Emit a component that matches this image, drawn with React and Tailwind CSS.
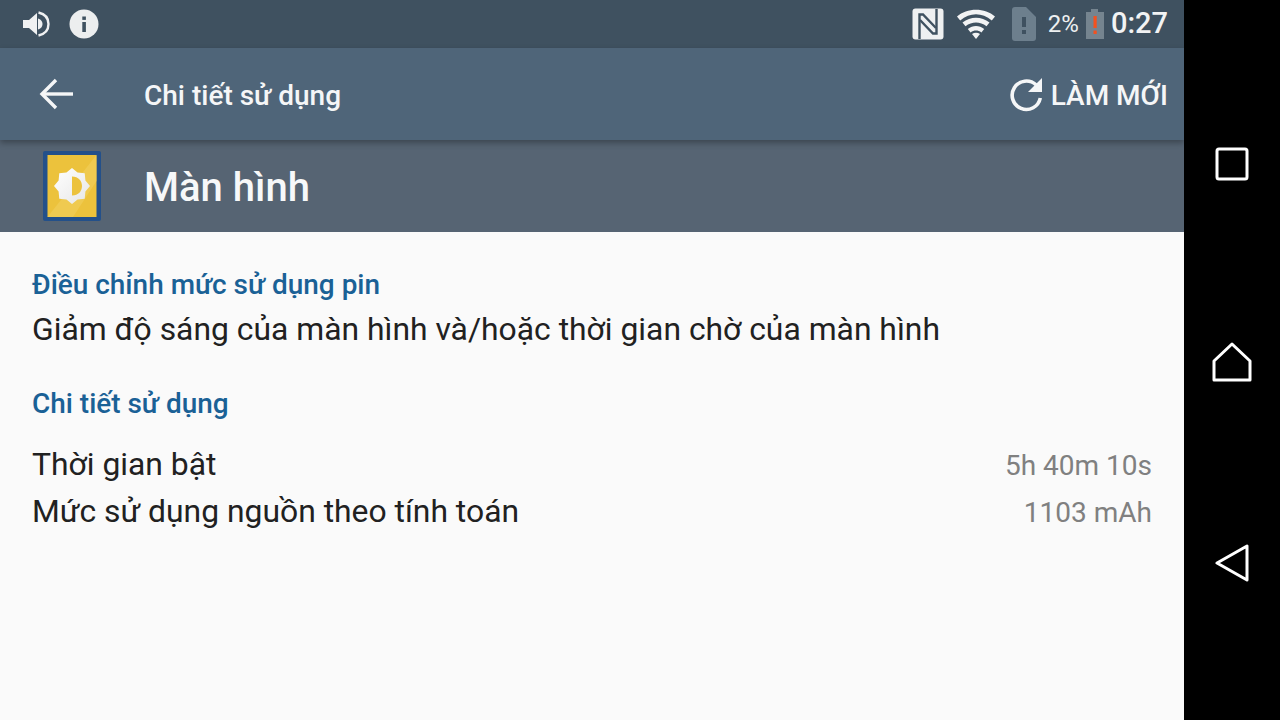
import React from "react";

function Speaker() {
  return (
    <svg width="28" height="28" viewBox="0 0 28 28" fill="none">
      <path d="M1 10h6l8-7v22l-8-7H1z" fill="#f0f1f2" />
      <path d="M16 8.500c3.500 1 4.500 3.500 4.500 5.500s-1 4.500-4.500 5.500z" fill="#f0f1f2" />
      <path d="M16.500 2.500c6.500 1.500 10 6 10 11.500s-3.500 10-10 11.500" stroke="#f0f1f2" strokeWidth="2.400" />
    </svg>
  );
}

function Info() {
  return (
    <svg width="30" height="30" viewBox="0 0 30 30">
      <circle cx="15" cy="15" r="14.500" fill="#eceeef" />
      <rect x="13.300" y="7.500" width="3.600" height="3.400" fill="#3f5160" />
      <rect x="13.300" y="13" width="3.600" height="10" fill="#3f5160" />
    </svg>
  );
}

function Nfc() {
  return (
    <svg width="32" height="32" viewBox="0 0 32 32" fill="none">
      <rect x="0.500" y="0.500" width="31" height="31" rx="3" fill="#eef0f1" />
      <path d="M7.500 31V6.500H11L24 20" stroke="#3f5160" strokeWidth="2.400" />
      <path d="M24.500 1v24.500H21L8 12" stroke="#3f5160" strokeWidth="2.400" />
    </svg>
  );
}

function Wifi() {
  return (
    <svg width="40" height="32" viewBox="0 0 40 32">
      <path d="M1 8.500C11-.5 29-.5 39 8.500l-3.200 4C26 4 14 4 4.200 12.500z" fill="#f2f3f4" />
      <path d="M6.500 14.500c8-6.500 19-6.500 27 0l-3 3.800c-6.500-5-14.500-5-21 0z" fill="#f2f3f4" />
      <path d="M11.800 21c5-4 11.400-4 16.400 0l-2.800 3.500c-3.400-2.600-7.400-2.600-10.800 0z" fill="#f2f3f4" />
      <path d="M16 26c2.400-1.600 5.600-1.600 8 0l-4 5z" fill="#f2f3f4" />
    </svg>
  );
}

function Sim() {
  return (
    <svg width="26" height="36" viewBox="0 0 26 36">
      <path d="M4 1h11l10 10v21a3 3 0 0 1-3 3H4a3 3 0 0 1-3-3V4a3 3 0 0 1 3-3z" fill="#6d7f8d" />
      <rect x="11" y="11" width="4" height="10" fill="#3f5160" />
      <rect x="11" y="24" width="4" height="4" fill="#3f5160" />
    </svg>
  );
}

function Battery() {
  return (
    <svg width="20" height="32" viewBox="0 0 20 32">
      <path d="M6 1h7v3h6v27H1V4h5z" fill="#75848f" />
      <rect x="8.500" y="8" width="3.200" height="12" fill="#f4511e" />
      <rect x="8.500" y="22.500" width="3.200" height="3.500" fill="#f4511e" />
    </svg>
  );
}

function Back() {
  return (
    <svg width="36" height="36" viewBox="0 0 36 36" fill="none" stroke="#f5f6f7" strokeWidth="3.400">
      <path d="M4 18h31" />
      <path d="M18 4 4 18l14 14" />
    </svg>
  );
}

function Refresh() {
  return (
    <svg width="36" height="36" viewBox="0 0 36 36" fill="none">
      <path d="M27 8.800A14.200 14.200 0 1 0 31.300 22" stroke="#f5f6f7" strokeWidth="3.600" />
      <path d="M33 2v14H19z" fill="#f5f6f7" />
    </svg>
  );
}

function sunPoints() {
  const pts = [];
  for (let i = 0; i < 16; i++) {
    const r = i % 2 === 0 ? 18 : 14.500;
    const a = (i * Math.PI) / 8;
    pts.push(`${(29 + r * Math.cos(a)).toFixed(2)},${(35 + r * Math.sin(a)).toFixed(2)}`);
  }
  return pts.join(" ");
}

function AppIcon() {
  return (
    <svg width="58" height="70" viewBox="0 0 58 70">
      <defs>
        <linearGradient id="sunFill" x1="0" y1="0" x2="1" y2="1">
          <stop offset="0" stopColor="#ffffff" />
          <stop offset="1" stopColor="#e6e6e6" />
        </linearGradient>
      </defs>
      <rect x="0" y="0" width="58" height="70" rx="2" fill="#23508a" />
      <rect x="4.500" y="4" width="49" height="62" fill="#ecc23c" />
      <path d="M4.500 66 53.500 4v26L30 66z" fill="#f1cd58" opacity="0.700" />
      <polygon points={sunPoints()} fill="url(#sunFill)" />
      <path d="M29 25.500c6.500 0 10 4.500 10 9.500s-3.500 9.500-10 9.500z" fill="#ecc23c" />
    </svg>
  );
}

function Square() {
  return (
    <svg width="34" height="34" viewBox="0 0 34 34" fill="none" stroke="#fff" strokeWidth="3">
      <rect x="2" y="2" width="30" height="30" rx="2" />
    </svg>
  );
}

function Home() {
  return (
    <svg width="40" height="40" viewBox="0 0 40 40" fill="none" stroke="#fff" strokeWidth="3" strokeLinejoin="round">
      <path d="M20 2 2 19v19h36V19z" />
    </svg>
  );
}

function Triangle() {
  return (
    <svg width="34" height="38" viewBox="0 0 34 38" fill="none" stroke="#fff" strokeWidth="3" strokeLinejoin="round">
      <path d="M32 2v34L2 19z" />
    </svg>
  );
}

function Row({ label, value }) {
  return (
    <div className="flex h-[47px] items-center justify-between">
      <span className="-mt-[1px] text-[31.850px] text-[#212121]">{label}</span>
      <span className="text-[28px] text-[#808080]">{value}</span>
    </div>
  );
}

export default function App() {
  return (
    <div className="flex h-[720px] w-[1280px] overflow-hidden font-['Roboto',sans-serif]">
      <div className="flex w-[1184px] flex-col">
        <div className="flex h-12 items-center bg-[#3f5160] pl-[22px] pr-4">
          <Speaker />
          <div className="ml-[19px]">
            <Info />
          </div>
          <div className="ml-auto flex items-center">
            <Nfc />
            <div className="ml-[12px]">
              <Wifi />
            </div>
            <div className="ml-[15px]">
              <Sim />
            </div>
            <span className="ml-[11px] text-[24px] text-[#eef0f1]">2%</span>
            <div className="ml-[6px]">
              <Battery />
            </div>
            <span className="ml-[6px] text-[29px] font-medium text-[#f2f3f4]">0:27</span>
          </div>
        </div>
        <div className="relative z-10 flex h-[92px] items-center bg-[#4f6579] pl-[38px] pr-4 shadow-[0_3px_6px_rgba(0,0,0,0.3)]">
          <Back />
          <span className="ml-[70px] pt-[3px] text-[28px] font-medium text-[#f5f6f7]">Chi tiết sử dụng</span>
          <div className="ml-auto flex items-center">
            <Refresh />
            <span className="ml-[6px] pt-[3px] text-[28px] font-medium text-[#f5f6f7]">LÀM MỚI</span>
          </div>
        </div>
        <div className="flex h-[92px] items-center bg-[#566473] pl-[43px]">
          <AppIcon />
          <span className="ml-[43px] pt-[3px] text-[40px] font-medium text-[#f7f8f9]">Màn hình</span>
        </div>
        <div className="flex-1 bg-[#fafafa] px-8 pt-[33px]">
          <div className="text-[27.950px] font-medium leading-[40px] text-[#1a6196]">Điều chỉnh mức sử dụng pin</div>
          <div className="text-[31.850px] leading-[48px] text-[#212121]">Giảm độ sáng của màn hình và/hoặc thời gian chờ của màn hình</div>
          <div className="mt-[31px] text-[27.950px] font-medium leading-[40px] text-[#1a6196]">Chi tiết sử dụng</div>
          <div className="mt-[18px]">
            <Row label="Thời gian bật" value="5h 40m 10s" />
            <Row label="Mức sử dụng nguồn theo tính toán" value="1103 mAh" />
          </div>
        </div>
      </div>
      <div className="flex flex-1 flex-col items-center bg-black pt-[147px]">
        <Square />
        <div className="mt-[161px]">
          <Home />
        </div>
        <div className="mt-[162px]">
          <Triangle />
        </div>
      </div>
    </div>
  );
}
